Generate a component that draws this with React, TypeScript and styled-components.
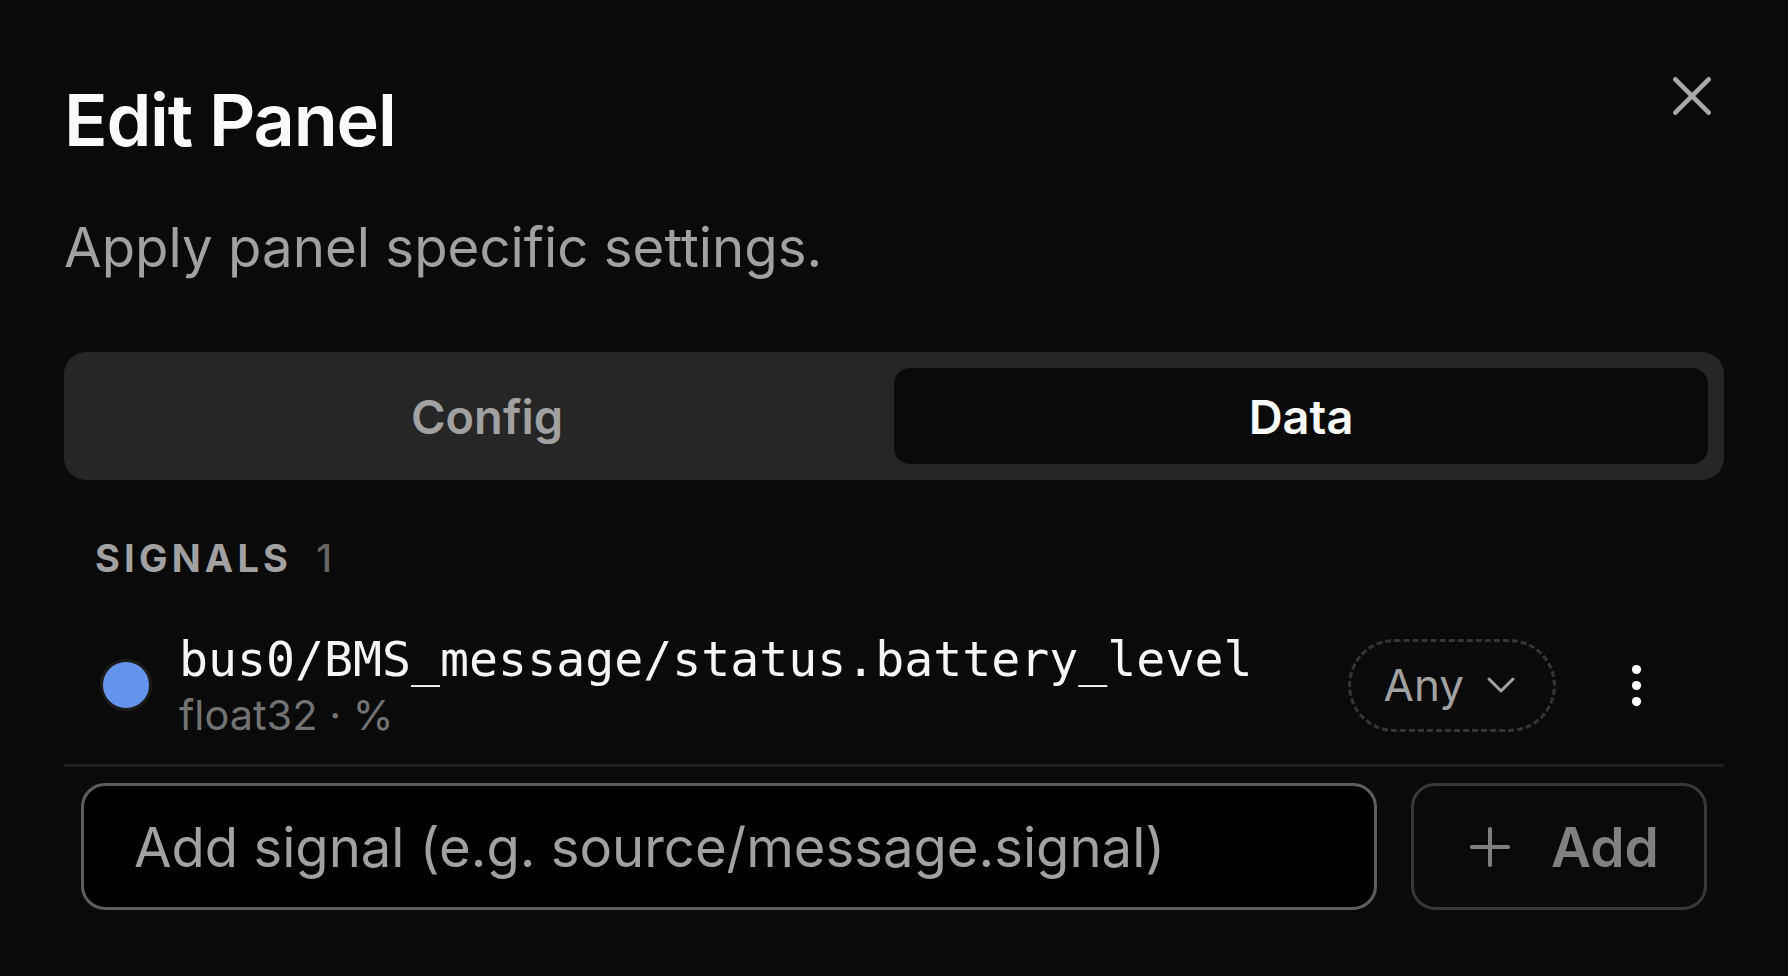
import React from "react";
import styled, { createGlobalStyle } from "styled-components";

const GlobalStyle = createGlobalStyle`
  html, body {
    margin: 0;
    padding: 0;
    background: #0a0a0a;
  }
  * { box-sizing: border-box; }
`;

const Page = styled.div`
  width: 1788px;
  height: 976px;
  background: #0a0a0a;
  padding: 76px 64px 0;
  font-family: Inter, "Noto Sans", sans-serif;
  color: #fafafa;
  display: flex;
  flex-direction: column;
  overflow: hidden;
`;

const Header = styled.div`
  display: flex;
  justify-content: space-between;
  align-items: flex-start;
`;

const TitleBlock = styled.div`
  display: flex;
  flex-direction: column;
  gap: 50px;
`;

const Title = styled.h1`
  margin: 0;
  font-size: 72px;
  line-height: 88px;
  font-weight: 600;
  letter-spacing: -1.2px;
  color: #fafafa;
`;

const Subtitle = styled.p`
  margin: 0;
  font-size: 54.6px;
  line-height: 66px;
  font-weight: 400;
  color: #a1a1a1;
`;

const CloseButton = styled.button`
  background: none;
  border: none;
  padding: 0;
  margin: 0 12px 0 0;
  width: 40px;
  height: 40px;
  display: flex;
  color: #a8a8a8;
  cursor: pointer;
`;

const Tabs = styled.div`
  margin-top: 72px;
  height: 128px;
  background: #262626;
  border-radius: 22px;
  padding: 16px;
  display: grid;
  grid-template-columns: 1fr 1fr;
`;

const Tab = styled.button<{ $active?: boolean }>`
  border: none;
  border-radius: 16px;
  background: ${(p) => (p.$active ? "#0a0a0a" : "transparent")};
  color: ${(p) => (p.$active ? "#fafafa" : "#a1a1a1")};
  font-family: Inter, "Noto Sans", sans-serif;
  font-size: 47px;
  font-weight: 600;
  display: flex;
  align-items: center;
  justify-content: center;
  cursor: pointer;
`;

const SectionHeader = styled.div`
  margin-top: 55px;
  padding-left: 31px;
  display: flex;
  align-items: baseline;
  gap: 24px;
  font-size: 38px;
  line-height: 46px;
`;

const SectionLabel = styled.span`
  font-weight: 700;
  letter-spacing: 4.2px;
  color: #a1a1a1;
`;

const SectionCount = styled.span`
  font-weight: 500;
  color: #666666;
`;

const SignalRow = styled.div`
  margin-top: 50px;
  padding: 0 60px 0 36px;
  display: flex;
  align-items: center;
`;

const ColorDot = styled.span<{ $color: string }>`
  width: 52px;
  height: 52px;
  border-radius: 50%;
  background: ${(p) => p.$color};
  border: 3.5px solid #1c1c1c;
  flex-shrink: 0;
`;

const SignalText = styled.div`
  margin-left: 27px;
  flex: 1;
  display: flex;
  flex-direction: column;
  gap: 4px;
`;

const SignalName = styled.div`
  font-family: "DejaVu Sans Mono", "Liberation Mono", monospace;
  font-size: 48.2px;
  line-height: 56px;
  color: #f5f5f5;
`;

const SignalMeta = styled.div`
  font-size: 41.5px;
  line-height: 48px;
  color: #737373;
`;

const AggPill = styled.button`
  height: 93px;
  border: 3px dashed #353535;
  border-radius: 999px;
  background: transparent;
  padding: 0 28px 0 33px;
  display: flex;
  align-items: center;
  gap: 13px;
  font-family: Inter, "Noto Sans", sans-serif;
  font-size: 44px;
  font-weight: 400;
  color: #a1a1a1;
  cursor: pointer;
`;

const KebabButton = styled.button`
  margin-left: 53px;
  background: none;
  border: none;
  padding: 0;
  display: flex;
  color: #ffffff;
  cursor: pointer;
`;

const Separator = styled.div`
  margin-top: 25px;
  height: 3px;
  background: #1f1f1f;
`;

const AddRow = styled.div`
  margin-top: 16px;
  padding: 0 17px;
  display: flex;
  gap: 34px;
  height: 127px;
`;

const SignalInput = styled.input`
  flex: 1;
  height: 100%;
  background: #000000;
  border: 3px solid #5e5e5e;
  border-radius: 24px;
  padding: 0 0 0 50px;
  font-family: Inter, "Noto Sans", sans-serif;
  font-size: 54.4px;
  color: #fafafa;
  outline: none;
  &::placeholder {
    color: #a1a1a1;
    opacity: 1;
  }
`;

const AddButton = styled.button`
  width: 296px;
  height: 100%;
  background: #0a0a0a;
  border: 3px solid #383838;
  border-radius: 24px;
  display: flex;
  align-items: center;
  justify-content: center;
  gap: 30px;
  font-family: Inter, "Noto Sans", sans-serif;
  font-size: 55px;
  font-weight: 600;
  color: #808080;
  cursor: pointer;
`;

const CloseIcon = () => (
  <svg width="40" height="40" viewBox="0 0 40 40" fill="none">
    <path
      d="M3.3 3.3 36.7 36.7M36.7 3.3 3.3 36.7"
      stroke="currentColor"
      strokeWidth="4.6"
      strokeLinecap="round"
    />
  </svg>
);

const ChevronDown = () => (
  <svg width="48" height="48" viewBox="0 0 24 24" fill="none">
    <path
      d="m6 9 6 6 6-6"
      stroke="currentColor"
      strokeWidth="1.5"
      strokeLinecap="round"
      strokeLinejoin="round"
    />
  </svg>
);

const KebabIcon = () => (
  <svg width="55" height="55" viewBox="0 0 24 24" fill="currentColor">
    <circle cx="12" cy="5" r="2" />
    <circle cx="12" cy="12" r="2" />
    <circle cx="12" cy="19" r="2" />
  </svg>
);

const PlusIcon = () => (
  <svg width="62" height="62" viewBox="0 0 24 24" fill="none">
    <path
      d="M5 12h14M12 5v14"
      stroke="currentColor"
      strokeWidth="1.55"
      strokeLinecap="round"
    />
  </svg>
);

export default function App() {
  return (
    <>
      <GlobalStyle />
      <Page>
        <Header>
          <TitleBlock>
            <Title>Edit Panel</Title>
            <Subtitle>Apply panel specific settings.</Subtitle>
          </TitleBlock>
          <CloseButton aria-label="Close">
            <CloseIcon />
          </CloseButton>
        </Header>

        <Tabs>
          <Tab>Config</Tab>
          <Tab $active>Data</Tab>
        </Tabs>

        <SectionHeader>
          <SectionLabel>SIGNALS</SectionLabel>
          <SectionCount>1</SectionCount>
        </SectionHeader>

        <SignalRow>
          <ColorDot $color="#6594ec" />
          <SignalText>
            <SignalName>bus0/BMS_message/status.battery_level</SignalName>
            <SignalMeta>float32 · %</SignalMeta>
          </SignalText>
          <AggPill>
            Any
            <ChevronDown />
          </AggPill>
          <KebabButton aria-label="More">
            <KebabIcon />
          </KebabButton>
        </SignalRow>

        <Separator />

        <AddRow>
          <SignalInput placeholder="Add signal (e.g. source/message.signal)" />
          <AddButton>
            <PlusIcon />
            Add
          </AddButton>
        </AddRow>
      </Page>
    </>
  );
}
